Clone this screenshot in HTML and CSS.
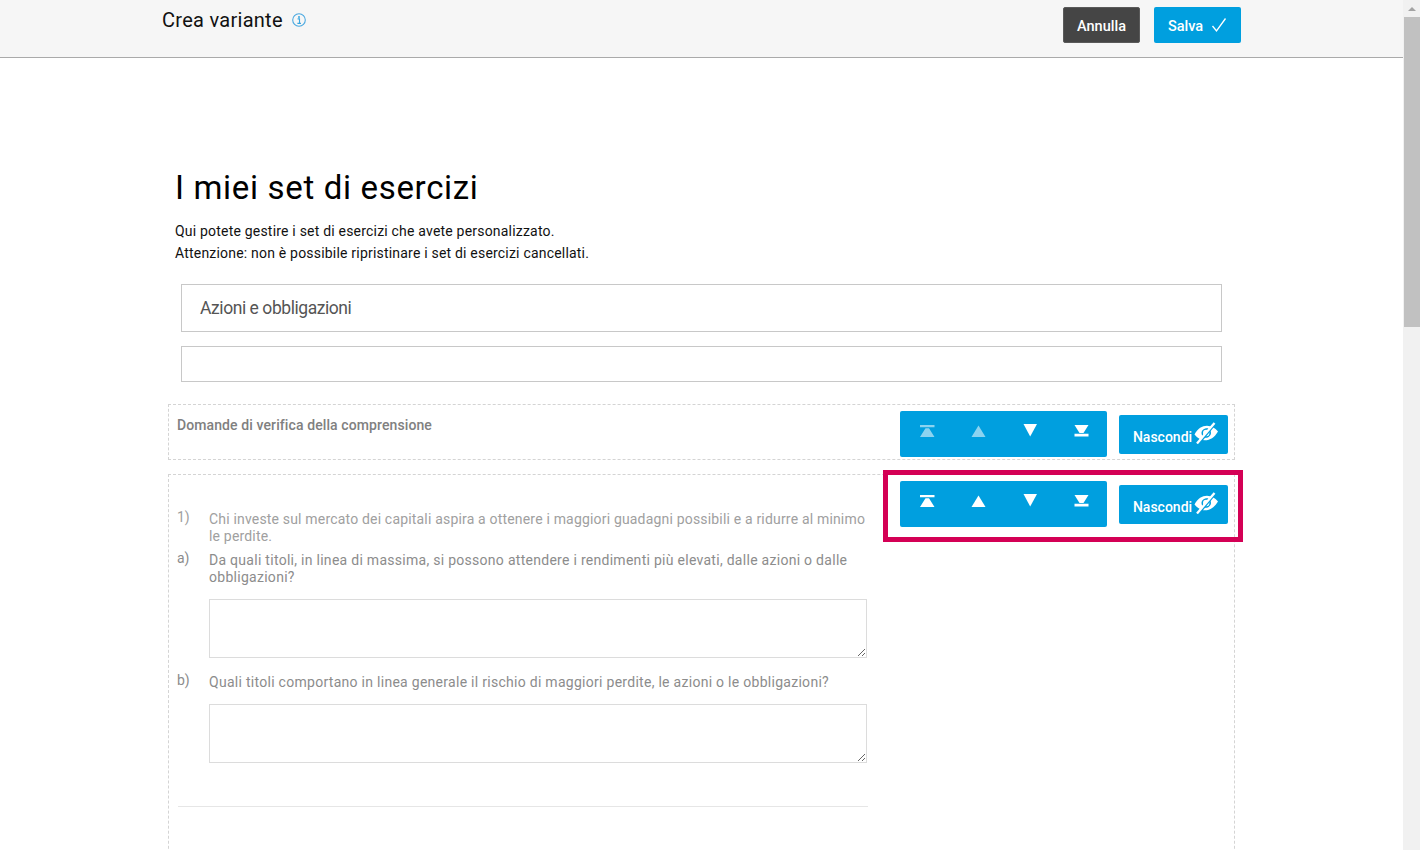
FILE: index.html
```html
<!DOCTYPE html>
<html lang="it">
<head>
<meta charset="utf-8">
<title>Crea variante</title>
<link rel="stylesheet" href="styles.css">
</head>
<body>
<div class="page">
  <header class="topbar">
    <div class="topbar-inner">
      <div class="topbar-title">
        <span class="topbar-text">Crea variante</span>
        <svg class="info-icon" viewBox="0 0 14 14" width="14" height="14"><circle cx="7" cy="7" r="6.300" fill="none" stroke="#4aa8e0" stroke-width="1.100"/><circle cx="7" cy="3.900" r="1" fill="#3aa6e0"/><path d="M5.600 5.900H7.500V10.300M5.400 10.400H9" fill="none" stroke="#3aa6e0" stroke-width="1.100"/></svg>
      </div>
      <div class="topbar-actions">
        <button class="btn btn-dark">Annulla</button>
        <button class="btn btn-blue">Salva
          <svg viewBox="0 0 16 16" width="16" height="16"><path d="M1.500 9L5.500 14L14.500 1.500" fill="none" stroke="#fff" stroke-width="1.300"/></svg>
        </button>
      </div>
    </div>
  </header>
  <main class="content">
    <h1 class="title">I miei set di esercizi</h1>
    <p class="intro">Qui potete gestire i set di esercizi che avete personalizzato.<br>Attenzione: non è possibile ripristinare i set di esercizi cancellati.</p>
    <div class="field field-name">Azioni e obbligazioni</div>
    <div class="field field-empty"></div>

    <section class="block block-head">
      <div class="block-heading">Domande di verifica della comprensione</div>
      <div class="controls">
        <div class="move-group">
          <span class="move dim"><svg viewBox="0 0 16 14" width="16" height="14"><path d="M1 1H15.500V3.300H1ZM6.500 4.200H10L15.500 13H1Z" fill="#fff"/></svg></span>
          <span class="move dim"><svg viewBox="0 0 16 14" width="16" height="14"><path d="M8.500 1.500L15.500 13H1.500Z" fill="#fff"/></svg></span>
          <span class="move"><svg viewBox="0 0 16 14" width="16" height="14"><path d="M1.500 0H15L8.200 12.500Z" fill="#fff"/></svg></span>
          <span class="move"><svg viewBox="0 0 16 14" width="16" height="14"><path d="M1.500 1H15.500L10.500 9H6.500ZM1.500 9.800H15.500V12.500H1.500Z" fill="#fff"/></svg></span>
        </div>
        <button class="btn-hide"><span class="hide-label">Nascondi</span>
          <svg class="eye" viewBox="0 0 24 22" width="24" height="22"><path fill-rule="evenodd" d="M0.500 12.500C4 6.500 8 3.800 13 3.800C17 3.800 21 6 24 9.500C20.500 15.500 16 18.300 11 18.300C7 18.300 3.500 16 0.500 12.500ZM13 6.300C10 6.300 7.500 8.500 7.500 11C7.500 13.700 10 15.800 12 15.800C14.500 15.800 17 13.500 17 11C17 8.500 15 6.300 13 6.300Z" fill="#fff"/><circle cx="12.200" cy="11" r="3.200" fill="#fff"/><path d="M5 21.500L21.500 1.500" stroke="#009fdf" stroke-width="2"/><path d="M3 21.500L20.500 1" stroke="#fff" stroke-width="2.300"/></svg>
        </button>
      </div>
    </section>

    <section class="block block-body">
      <div class="exercise">
        <div class="row row-first"><span class="row-label">1)</span><p class="row-text">Chi investe sul mercato dei capitali aspira a ottenere i maggiori guadagni possibili e a ridurre al minimo<br>le perdite.</p></div>
        <div class="row row-a"><span class="row-label">a)</span><p class="row-text">Da quali titoli, in linea di massima, si possono attendere i rendimenti più elevati, dalle azioni o dalle obbligazioni?</p></div>
        <textarea class="answer answer-a"></textarea>
        <div class="row row-b"><span class="row-label">b)</span><p class="row-text">Quali titoli comportano in linea generale il rischio di maggiori perdite, le azioni o le obbligazioni?</p></div>
        <textarea class="answer answer-b"></textarea>
        <hr class="rule">
      </div>
      <div class="controls">
        <div class="move-group">
          <span class="move"><svg viewBox="0 0 16 14" width="16" height="14"><path d="M1 1H15.500V3.300H1ZM6.500 4.200H10L15.500 13H1Z" fill="#fff"/></svg></span>
          <span class="move"><svg viewBox="0 0 16 14" width="16" height="14"><path d="M8.500 1.500L15.500 13H1.500Z" fill="#fff"/></svg></span>
          <span class="move"><svg viewBox="0 0 16 14" width="16" height="14"><path d="M1.500 0H15L8.200 12.500Z" fill="#fff"/></svg></span>
          <span class="move"><svg viewBox="0 0 16 14" width="16" height="14"><path d="M1.500 1H15.500L10.500 9H6.500ZM1.500 9.800H15.500V12.500H1.500Z" fill="#fff"/></svg></span>
        </div>
        <button class="btn-hide"><span class="hide-label">Nascondi</span>
          <svg class="eye" viewBox="0 0 24 22" width="24" height="22"><path fill-rule="evenodd" d="M0.500 12.500C4 6.500 8 3.800 13 3.800C17 3.800 21 6 24 9.500C20.500 15.500 16 18.300 11 18.300C7 18.300 3.500 16 0.500 12.500ZM13 6.300C10 6.300 7.500 8.500 7.500 11C7.500 13.700 10 15.800 12 15.800C14.500 15.800 17 13.500 17 11C17 8.500 15 6.300 13 6.300Z" fill="#fff"/><circle cx="12.200" cy="11" r="3.200" fill="#fff"/><path d="M5 21.500L21.500 1.500" stroke="#009fdf" stroke-width="2"/><path d="M3 21.500L20.500 1" stroke="#fff" stroke-width="2.300"/></svg>
        </button>
      </div>
    </section>
    <div class="highlight"></div>
  </main>
</div>
<div class="scrollbar">
  <div class="scroll-arrow"></div>
  <div class="scroll-thumb"></div>
</div>
</body>
</html>
```
FILE: styles.css
```css
* { box-sizing: border-box; }
html, body { height: 100%; }
body {
  margin: 0;
  display: flex;
  height: 850px;
  overflow: hidden;
  background: #fff;
  color: #000;
  font-family: Roboto, "Liberation Sans", sans-serif;
}
.page { width: 1403px; flex: none; }
.scrollbar { width: 17px; flex: none; background: #f1f1f1; }
.scroll-arrow {
  height: 17px;
  display: flex;
  align-items: center;
  justify-content: center;
}
.scroll-arrow::before {
  content: "";
  border-left: 4px solid transparent;
  border-right: 4px solid transparent;
  border-bottom: 4px solid #a3a3a3;
}
.scroll-thumb { height: 310px; background: #c1c1c1; margin-left: 1px; }

.topbar { height: 58px; background: #f6f6f6; border-bottom: 1px solid #aaa; }
.topbar-inner {
  margin-left: 162px;
  width: 1079px;
  display: flex;
  justify-content: space-between;
}
.topbar-title { display: flex; align-items: center; height: 40px; gap: 9px; }
.topbar-text { font-size: 20px; letter-spacing: 0.28px; color: #111; }
.topbar-actions { display: flex; gap: 14px; padding-top: 7px; }
.btn {
  height: 36px;
  border-radius: 2px;
  border: 0;
  color: #fff;
  font: 500 14.500px Roboto, "Liberation Sans", sans-serif;
  display: flex;
  align-items: center;
  justify-content: center;
  padding: 2px 0 0;
}
.btn svg { margin-bottom: 2px; }
.btn-dark { width: 77px; background: #454545; border: 1px solid #5a5a5a; }
.btn-blue { width: 87px; background: #009fdf; gap: 8px; }

.content { position: relative; padding: 110px 0 0 168px; width: 1403px; }
.title {
  margin: 0 0 0 7px;
  height: 40px;
  font-size: 33px;
  line-height: 40px;
  font-weight: 400;
  letter-spacing: 0.67px;
  white-space: nowrap;
}
.intro {
  margin: 12px 0 0 7px;
  font-size: 14px;
  line-height: 22px;
  letter-spacing: 0.2px;
  color: #111;
}
.field {
  width: 1041px;
  margin-left: 13px;
  background: #fff;
  border: 1px solid #c8c8c8;
}
.field-name {
  height: 48px;
  margin-top: 20px;
  padding: 0 18px;
  line-height: 47px;
  font-size: 17.500px;
  letter-spacing: -0.44px;
  color: #555;
}
.field-empty { height: 36px; margin-top: 14px; }

.block {
  width: 1067px;
  border: 1px dashed #d4d4d4;
  display: flex;
  justify-content: space-between;
}
.block-head { height: 56px; margin-top: 22px; padding: 6px 6px 0 8px; }
.block-heading {
  font-size: 14px;
  font-weight: 500;
  line-height: 28px;
  letter-spacing: 0.1px;
  color: #808080;
}
.block-body { height: 420px; margin-top: 14px; padding: 6px 6px 0 8px; }
.controls { display: flex; align-items: flex-start; gap: 12px; }
.move-group {
  width: 207px;
  height: 46px;
  background: #009fdf;
  border-radius: 2px;
  display: flex;
  padding: 0 0 0 1px;
}
.move {
  width: 51.500px;
  height: 40px;
  display: flex;
  align-items: center;
  justify-content: center;
}
.move.dim svg { opacity: 0.55; }
.btn-hide {
  width: 109px;
  height: 39px;
  margin-top: 4px;
  padding: 0 0 0 4px;
  border: 0;
  border-radius: 2px;
  background: #009fdf;
  color: #fff;
  font: 500 14px Roboto, "Liberation Sans", sans-serif;
  display: flex;
  align-items: center;
  justify-content: center;
  gap: 2px;
}
.hide-label { margin-top: 4px; }
.eye { margin-bottom: 3px; }
.exercise { width: 691px; }
.row {
  display: flex;
  font-size: 14px;
  line-height: 17px;
  color: #8c8c8c;
}
.row-label { width: 32px; flex: none; margin-top: -2px; }
.row-text { margin: 0; width: 658px; letter-spacing: 0.28px; }
.row-first { padding-top: 30px; color: #a0a0a0; }
.row-first .row-text { letter-spacing: 0.18px; white-space: nowrap; }
.row-a { margin-top: 7px; }
.row-b { margin-top: 16px; }
.answer {
  display: block;
  width: 658px;
  height: 59px;
  margin: 13px 0 0 32px;
  border: 1px solid #dcdcdc;
  background: #fff;
  padding: 0;
  outline: 0;
}
.rule {
  width: 690px;
  margin: 43px 0 0 1px;
  border: 0;
  border-top: 1px solid #e6e6e6;
}
.highlight {
  position: absolute;
  left: 883px;
  top: 412px;
  width: 360px;
  height: 72px;
  border: 5px solid #d40055;
  pointer-events: none;
}
```
